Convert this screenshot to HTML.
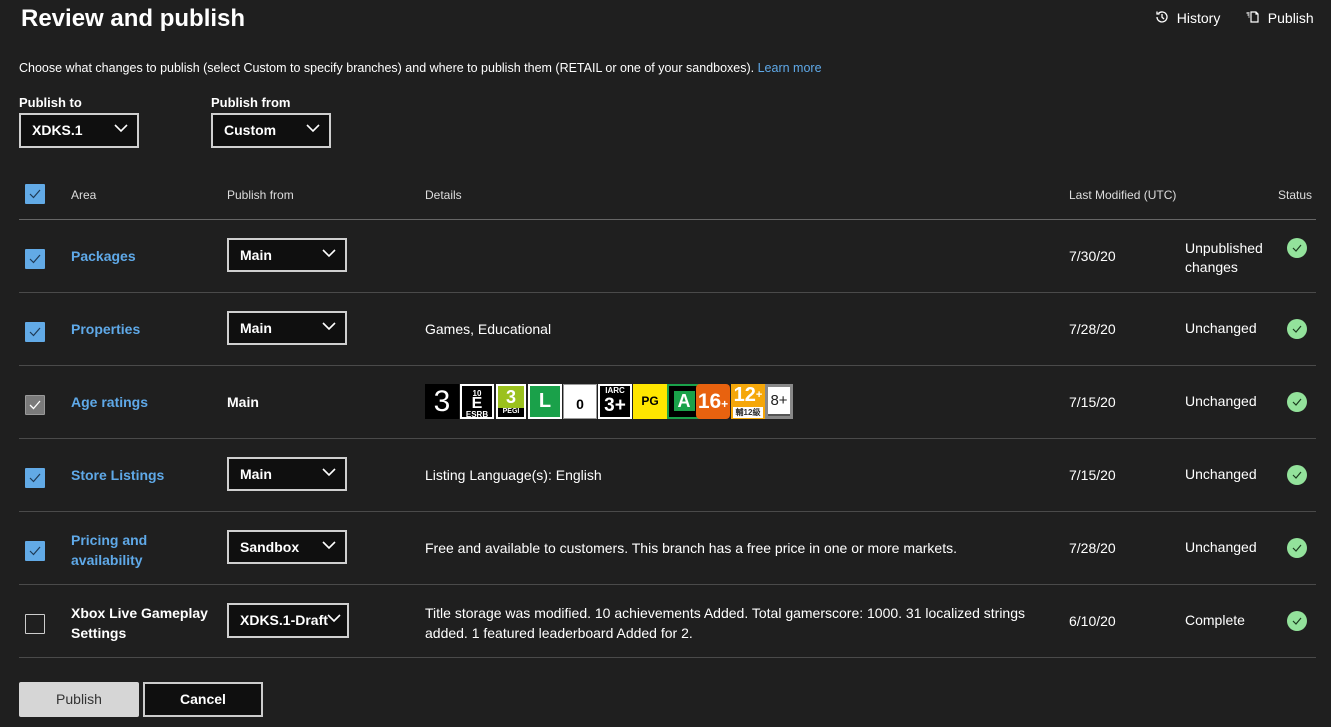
<!DOCTYPE html>
<html><head><meta charset="utf-8"><style>
*{box-sizing:border-box;margin:0;padding:0}
body{width:1331px;height:727px;background:#1f1f1f;color:#fff;font-family:"Liberation Sans",sans-serif;font-size:14px;position:relative;overflow:hidden}
.a{position:absolute;white-space:nowrap}
.b{font-weight:bold}
.lnk{color:#5fa9e8;font-weight:bold}
.sm{font-size:12px;color:#ddd}
.hr{position:absolute;left:19px;width:1297px;height:1px;background:#4a4a4a}
.dd{position:absolute;background:#0f0f0f;border:2px solid #cfcfcf;font-weight:bold;padding-left:11px;line-height:30px}
.dd svg{position:absolute;right:9px;top:9px}
.cb{position:absolute;left:25px;width:20px;height:20px;background:#62aae6;border-radius:1px}
.cb svg{position:absolute;left:4px;top:5px}
.ok{position:absolute;left:1287px;width:20px;height:20px;border-radius:50%;background:#93e29b}
.ok svg{position:absolute;left:5px;top:6px}
.r{position:absolute;top:384px;height:35px;width:34px;text-align:center;font-weight:bold}
</style></head><body>
<div class="a b" style="left:21px;top:5px;font-size:24px">Review and publish</div>
<div class="a" style="left:1155px;top:10px;font-size:14px"><svg width="14" height="14" viewBox="0 0 14 14" style="vertical-align:-1px"><path d="M2 7a5 5 0 1 0 1.5-3.6M2 1.5v2.5h2.5M7 4v3.2l2 1.8" fill="none" stroke="#fff" stroke-width="1.3"/></svg>&nbsp; History</div>
<div class="a" style="left:1246px;top:10px;font-size:14px"><svg width="14" height="14" viewBox="0 0 14 14" style="vertical-align:-1px"><path d="M5 2h5l2 2v8H5zM10 2v2h2M0.5 3h3M1.5 5h2M2.5 7h1" fill="none" stroke="#fff" stroke-width="1.2"/></svg>&nbsp; Publish</div>
<div class="a" style="left:19px;top:61px;font-size:12.5px">Choose what changes to publish (select Custom to specify branches) and where to publish them (RETAIL or one of your sandboxes). <span style="color:#5fa9e8">Learn more</span></div>
<div class="a b" style="left:19px;top:95px;font-size:13px">Publish to</div>
<div class="a b" style="left:211px;top:95px;font-size:13px">Publish from</div>
<div class="dd" style="left:19px;top:113px;width:120px;height:35px">XDKS.1<svg width="14" height="9"><path d="M1 1l6 6 6-6" fill="none" stroke="#fff" stroke-width="1.6"/></svg></div>
<div class="dd" style="left:211px;top:113px;width:120px;height:35px">Custom<svg width="14" height="9"><path d="M1 1l6 6 6-6" fill="none" stroke="#fff" stroke-width="1.6"/></svg></div>

<div class="cb" style="top:184px"><svg width="12" height="10"><path d="M1 5l3.5 3.5L11 1" fill="none" stroke="#1f3a55" stroke-width="1.2"/></svg></div>
<div class="a sm" style="left:71px;top:188px">Area</div>
<div class="a sm" style="left:227px;top:188px">Publish from</div>
<div class="a sm" style="left:425px;top:188px">Details</div>
<div class="a sm" style="left:1069px;top:188px">Last Modified (UTC)</div>
<div class="a sm" style="left:1278px;top:188px">Status</div>
<div class="hr" style="top:219px;background:#666"></div>

<!-- row1 -->
<div class="cb" style="top:249px"><svg width="12" height="10"><path d="M1 5l3.5 3.5L11 1" fill="none" stroke="#1f3a55" stroke-width="1.2"/></svg></div>
<div class="a lnk" style="left:71px;top:248px">Packages</div>
<div class="dd" style="left:227px;top:238px;width:120px;height:34px">Main<svg width="14" height="9"><path d="M1 1l6 6 6-6" fill="none" stroke="#fff" stroke-width="1.6"/></svg></div>
<div class="a" style="left:1069px;top:248px">7/30/20</div>
<div class="a" style="left:1185px;top:239px;line-height:19px">Unpublished<br>changes</div>
<div class="ok" style="top:238px"><svg width="10" height="8"><path d="M1 4l3 3 5-6" fill="none" stroke="#1a3a1e" stroke-width="1.2"/></svg></div>
<div class="hr" style="top:292px"></div>

<!-- row2 -->
<div class="cb" style="top:322px"><svg width="12" height="10"><path d="M1 5l3.5 3.5L11 1" fill="none" stroke="#1f3a55" stroke-width="1.2"/></svg></div>
<div class="a lnk" style="left:71px;top:321px">Properties</div>
<div class="dd" style="left:227px;top:311px;width:120px;height:34px">Main<svg width="14" height="9"><path d="M1 1l6 6 6-6" fill="none" stroke="#fff" stroke-width="1.6"/></svg></div>
<div class="a" style="left:425px;top:321px">Games, Educational</div>
<div class="a" style="left:1069px;top:321px">7/28/20</div>
<div class="a" style="left:1185px;top:320px">Unchanged</div>
<div class="ok" style="top:319px"><svg width="10" height="8"><path d="M1 4l3 3 5-6" fill="none" stroke="#1a3a1e" stroke-width="1.2"/></svg></div>
<div class="hr" style="top:365px"></div>

<!-- row3 -->
<div class="cb" style="top:395px;background:#7a7a7a;border:1px solid #999"><svg width="12" height="10" style="left:3px;top:4px"><path d="M1 5l3.5 3.5L11 1" fill="none" stroke="#fff" stroke-width="1.3"/></svg></div>
<div class="a lnk" style="left:71px;top:394px">Age ratings</div>
<div class="a b" style="left:227px;top:394px">Main</div>
<div class="r" style="left:425px;background:#000;font-weight:normal;font-size:30px;line-height:35px">3</div>
<div class="r" style="left:460px;background:#000;border:2px solid #fff;font-size:8px;line-height:9px;padding-top:3px">10<br><span style="font-size:16px;line-height:12px">E</span><br>ESRB</div>
<div class="r" style="left:496px;background:#000;border:2px solid #fff;width:30px"><div style="background:#9bc11e;height:22px;font-size:18px;line-height:22px">3</div><div style="font-size:7px">PEGI</div></div>
<div class="r" style="left:528px;background:#1aa14a;border:2px solid #fff;font-size:20px;line-height:31px">L</div>
<div class="r" style="left:563px;background:#fff;color:#000;border:1px solid #999;font-size:14px;line-height:38px">0</div>
<div class="r" style="left:598px;background:#000;border:2px solid #fff;font-size:8px;line-height:9px">IARC<br><span style="font-size:19px;line-height:22px">3+</span></div>
<div class="r" style="left:633px;background:#ffe600;color:#000;font-size:12px;line-height:35px">PG</div>
<div class="r" style="left:667px;background:#000;border:2px solid #1aa14a;color:#fff;font-size:18px;line-height:30px"><span style="background:#1aa14a;padding:0 4px">A</span></div>
<div class="r" style="left:696px;background:#e8620f;border-radius:4px;font-size:21px;line-height:35px">16<span style="font-size:12px">+</span></div>
<div class="r" style="left:731px;background:#f5a70a;font-size:20px;line-height:23px">12<span style="font-size:11px;vertical-align:top">+</span><div style="background:#fff;color:#333;font-size:8px;line-height:11px;margin:0 2px">輔12級</div></div>
<div class="r" style="left:765px;width:28px;background:#555;border:3px solid #888"><div style="background:#fff;color:#222;height:27px;font-size:15px;line-height:27px;font-weight:normal">8+</div></div>
<div class="a" style="left:1069px;top:394px">7/15/20</div>
<div class="a" style="left:1185px;top:393px">Unchanged</div>
<div class="ok" style="top:392px"><svg width="10" height="8"><path d="M1 4l3 3 5-6" fill="none" stroke="#1a3a1e" stroke-width="1.2"/></svg></div>
<div class="hr" style="top:438px"></div>

<!-- row4 -->
<div class="cb" style="top:468px"><svg width="12" height="10"><path d="M1 5l3.5 3.5L11 1" fill="none" stroke="#1f3a55" stroke-width="1.2"/></svg></div>
<div class="a lnk" style="left:71px;top:467px">Store Listings</div>
<div class="dd" style="left:227px;top:457px;width:120px;height:34px">Main<svg width="14" height="9"><path d="M1 1l6 6 6-6" fill="none" stroke="#fff" stroke-width="1.6"/></svg></div>
<div class="a" style="left:425px;top:467px">Listing Language(s): English</div>
<div class="a" style="left:1069px;top:467px">7/15/20</div>
<div class="a" style="left:1185px;top:466px">Unchanged</div>
<div class="ok" style="top:465px"><svg width="10" height="8"><path d="M1 4l3 3 5-6" fill="none" stroke="#1a3a1e" stroke-width="1.2"/></svg></div>
<div class="hr" style="top:511px"></div>

<!-- row5 -->
<div class="cb" style="top:541px"><svg width="12" height="10"><path d="M1 5l3.5 3.5L11 1" fill="none" stroke="#1f3a55" stroke-width="1.2"/></svg></div>
<div class="a lnk" style="left:71px;top:530px;line-height:20px">Pricing and<br>availability</div>
<div class="dd" style="left:227px;top:530px;width:120px;height:34px">Sandbox<svg width="14" height="9"><path d="M1 1l6 6 6-6" fill="none" stroke="#fff" stroke-width="1.6"/></svg></div>
<div class="a" style="left:425px;top:540px">Free and available to customers. This branch has a free price in one or more markets.</div>
<div class="a" style="left:1069px;top:540px">7/28/20</div>
<div class="a" style="left:1185px;top:539px">Unchanged</div>
<div class="ok" style="top:538px"><svg width="10" height="8"><path d="M1 4l3 3 5-6" fill="none" stroke="#1a3a1e" stroke-width="1.2"/></svg></div>
<div class="hr" style="top:584px"></div>

<!-- row6 -->
<div class="cb" style="top:614px;background:transparent;border:1px solid #ccc"></div>
<div class="a b" style="left:71px;top:603px;line-height:20px">Xbox Live Gameplay<br>Settings</div>
<div class="dd" style="left:227px;top:603px;width:122px;height:35px;padding-left:11px">XDKS.1-Draft<svg width="14" height="9" style="right:6px"><path d="M1 1l6 6 6-6" fill="none" stroke="#fff" stroke-width="1.6"/></svg></div>
<div class="a" style="left:425px;top:603px;line-height:20px">Title storage was modified. 10 achievements Added. Total gamerscore: 1000. 31 localized strings<br>added. 1 featured leaderboard Added for 2.</div>
<div class="a" style="left:1069px;top:613px">6/10/20</div>
<div class="a" style="left:1185px;top:612px">Complete</div>
<div class="ok" style="top:611px"><svg width="10" height="8"><path d="M1 4l3 3 5-6" fill="none" stroke="#1a3a1e" stroke-width="1.2"/></svg></div>
<div class="hr" style="top:657px"></div>

<div class="a" style="left:19px;top:682px;width:120px;height:35px;background:#d6d6d6;color:#333;border-radius:2px;text-align:center;line-height:35px">Publish</div>
<div class="a b" style="left:143px;top:682px;width:120px;height:35px;background:#0f0f0f;border:2px solid #ccc;text-align:center;line-height:31px">Cancel</div>
</body></html>
